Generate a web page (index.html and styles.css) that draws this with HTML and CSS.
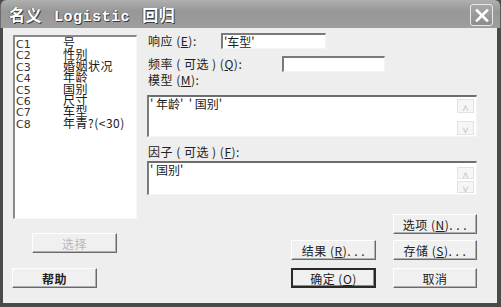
FILE: index.html
```html
<!DOCTYPE html>
<html lang="zh-CN">
<head>
    <meta charset="UTF-8">
    <title>名义 Logistic 回归</title>
    <link rel="stylesheet" href="styles.css">
</head>
<body>
    <div class="window">
        <div class="titlebar">
            <span class="title">名义 <span class="mono">Logistic</span> 回归</span>
            <span class="close">
                <svg width="14" height="13" viewBox="0 0 14 13">
                    <path d="M2 1.5 L12 11.5 M12 1.5 L2 11.5" stroke="#fff" stroke-width="2.6" stroke-linecap="square" fill="none"/>
                </svg>
            </span>
        </div>
        <div class="client">
            <div class="leftcol">
                <div class="varlist">
                    <div class="var"><span class="col">C1</span><span class="name">号</span></div>
                    <div class="var"><span class="col">C2</span><span class="name">性别</span></div>
                    <div class="var"><span class="col">C3</span><span class="name">婚姻状况</span></div>
                    <div class="var"><span class="col">C4</span><span class="name">年龄</span></div>
                    <div class="var"><span class="col">C5</span><span class="name">国别</span></div>
                    <div class="var"><span class="col">C6</span><span class="name">尺寸</span></div>
                    <div class="var"><span class="col">C7</span><span class="name">车型</span></div>
                    <div class="var"><span class="col">C8</span><span class="name">年青?(&lt;30)</span></div>
                </div>
                <button class="btn btn-select" disabled>选择</button>
                <button class="btn btn-help">帮助</button>
            </div>
            <div class="rightcol">
                <div class="row">
                    <span class="label lbl-resp">响应 (<u>E</u>):</span>
                    <span class="field field-resp">'车型'</span>
                </div>
                <div class="row row2">
                    <span class="label lbl-freq">频率 ( 可选 ) (<u>Q</u>):</span>
                    <span class="field field-freq"></span>
                </div>
                <div class="label lbl-model">模型 (<u>M</u>):</div>
                <div class="memo memo-model">
                    <div class="memo-text">' 年龄'&nbsp; ' 国别'</div>
                    <div class="spin">
                        <span class="arrow">&#708;</span>
                        <span class="arrow">&#709;</span>
                    </div>
                </div>
                <div class="label lbl-factor">因子 ( 可选 ) (<u>F</u>):</div>
                <div class="memo memo-factor">
                    <div class="memo-text">' 国别'</div>
                    <div class="spin">
                        <span class="arrow">&#708;</span>
                        <span class="arrow">&#709;</span>
                    </div>
                </div>
                <div class="buttons">
                    <span></span>
                    <button class="btn">选项 (<u>N</u>). . .</button>
                    <button class="btn">结果 (<u>R</u>). . .</button>
                    <button class="btn">存储 (<u>S</u>). . .</button>
                    <button class="btn btn-default">确定 (<u>O</u>)</button>
                    <button class="btn">取消</button>
                </div>
            </div>
        </div>
    </div>
</body>
</html>
```
FILE: styles.css
```css
body {
    margin: 0;
    background-color: #ffffff;
    font-family: "Liberation Sans", "Noto Sans CJK SC", sans-serif;
    color: #1a1a1a;
    overflow: hidden;
}

.window {
    width: 501px;
    height: 307px;
    display: flex;
    flex-direction: column;
    background-color: #4a4a4a;
    box-sizing: border-box;
}

.titlebar {
    height: 28px;
    flex: none;
    display: flex;
    align-items: center;
    justify-content: space-between;
    padding: 0 7px 0 8px;
    background: linear-gradient(#b0b0b0, #979797 40%, #9e9e9e);
    border-radius: 6px 6px 0 0;
    border-left: 1px solid #6c6c6c;
    border-right: 1px solid #5a5a5a;
}

.title {
    font-family: "Liberation Mono", "Noto Sans CJK SC", monospace;
    font-size: 16px;
    font-weight: bold;
    color: #ffffff;
    letter-spacing: 0.5px;
    word-spacing: 2px;
    text-shadow: 1px 1px 0 #3c3c3c, -1px 0 0 #6a6a6a;
}

.mono {
    font-family: "Liberation Mono", monospace;
    font-size: 15px;
}

.close {
    width: 21px;
    height: 20px;
    display: flex;
    align-items: center;
    justify-content: center;
    border: 1px solid #e8e8e8;
    border-radius: 3px;
    background: linear-gradient(#a8a8a8, #8c8c8c);
    margin-top: 2px;
}

.client {
    flex: 1;
    display: flex;
    background-color: #eeeeee;
    margin: 0 4px 4px 3px;
    gap: 9px;
    font-size: 12px;
}

.leftcol {
    width: 125px;
    padding: 7px 0 0 10px;
    display: flex;
    flex-direction: column;
    align-items: flex-start;
}

.varlist {
    width: 120px;
    height: 181px;
    background-color: #ffffff;
    border-top: 2px solid #8a8a8a;
    border-left: 2px solid #8a8a8a;
    border-right: 1px solid #f8f8f8;
    border-bottom: 1px solid #f8f8f8;
    padding: 0 0 0 1px;
}

.var {
    display: flex;
    align-items: baseline;
    height: 11.4px;
    line-height: 11.4px;
}

.col {
    width: 47px;
    font-family: "DejaVu Sans", sans-serif;
    font-size: 11px;
    color: #333333;
}

.name {
    font-family: "Noto Sans CJK SC", sans-serif;
    font-size: 12px;
    letter-spacing: 0.5px;
}

.btn {
    height: 20px;
    box-sizing: border-box;
    background-color: #f0f0f0;
    border: 1px solid;
    border-color: #ffffff #6a6a6a #6a6a6a #ffffff;
    box-shadow: inset -1px -1px 0 #b0b0b0;
    font-family: "Noto Sans CJK SC", "Liberation Sans", sans-serif;
    font-size: 12px;
    color: #222222;
    padding: 0;
    line-height: 17px;
    letter-spacing: 0.5px;
}

.btn-select {
    width: 85px;
    margin: 14px 0 0 19px;
    color: #b8b8b8;
}

.btn-help {
    width: 85px;
    margin: 15px 0 0 -1px;
    font-weight: bold;
}

.rightcol {
    width: 330px;
    padding-top: 5px;
    display: flex;
    flex-direction: column;
    font-family: "Noto Sans CJK SC", sans-serif;
}

.row {
    display: flex;
    align-items: center;
    height: 16px;
}

.row2 {
    margin-top: 7px;
}

.label {
    font-size: 12px;
    line-height: 14px;
    color: #222222;
    padding-left: 1px;
    letter-spacing: 0.5px;
}

.lbl-resp {
    width: 73px;
}

.lbl-freq {
    width: 134px;
}

.field {
    height: 16px;
    box-sizing: border-box;
    background-color: #ffffff;
    border-top: 2px solid #7a7a7a;
    border-left: 2px solid #7a7a7a;
    border-right: 1px solid #f4f4f4;
    border-bottom: 1px solid #f4f4f4;
    font-size: 12px;
    line-height: 13px;
    padding-left: 1px;
}

.field-resp {
    width: 105px;
}

.field-freq {
    width: 103px;
}

.lbl-model {
    margin-top: 1px;
}

.memo {
    display: flex;
    width: 330px;
    box-sizing: border-box;
    background-color: #ffffff;
    border-top: 2px solid #6e6e6e;
    border-left: 2px solid #7a7a7a;
    border-right: 1px solid #f4f4f4;
    border-bottom: 1px solid #f4f4f4;
}

.memo-model {
    height: 42px;
    margin-top: 8px;
}

.memo-factor {
    height: 34px;
    margin-top: 2px;
}

.lbl-factor {
    margin-top: 8px;
}

.memo-text {
    flex: 1;
    font-size: 12px;
    line-height: 14px;
    padding-left: 1px;
}

.spin {
    width: 17px;
    margin-right: 2px;
    padding-top: 2px;
    display: flex;
    flex-direction: column;
    justify-content: space-between;
    padding-bottom: 1px;
}

.memo-factor .spin {
    padding-top: 4px;
}

.arrow {
    height: 14px;
    border: 1px solid #e2e2e2;
    background-color: #f6f6f6;
    color: #c4c4c4;
    font-size: 11px;
    line-height: 14px;
    text-align: center;
    box-sizing: border-box;
}

.memo-factor .arrow {
    height: 12px;
    line-height: 12px;
}

.buttons {
    margin-top: 19px;
    display: grid;
    grid-template-columns: 85px 84px;
    column-gap: 17px;
    row-gap: 6px;
    justify-content: end;
}

.buttons .btn:nth-child(6),
.buttons .btn:nth-child(5) {
    margin-top: 2px;
}

.btn-default {
    border: 2px solid #2a2a2a;
    box-shadow: inset -1px -1px 0 #8a8a8a;
    line-height: 15px;
}
```
